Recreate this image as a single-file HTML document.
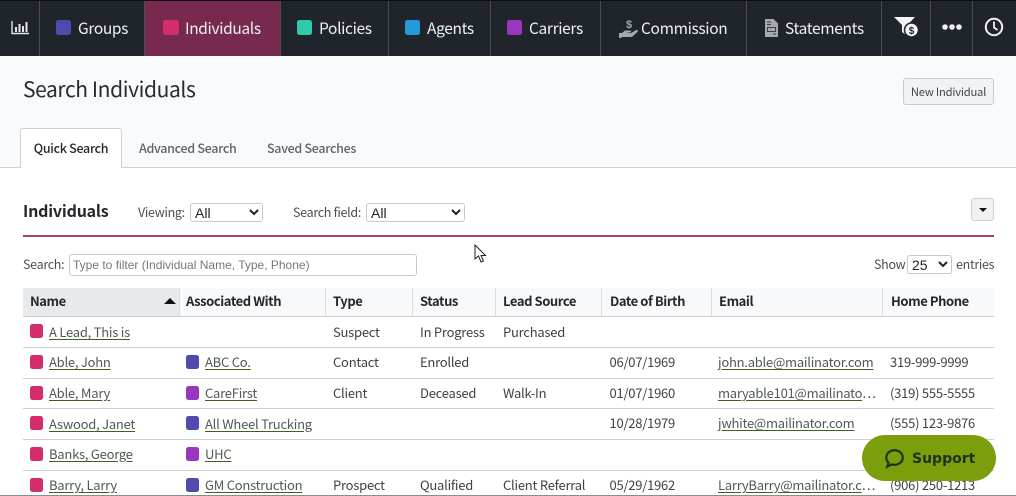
<!DOCTYPE html>
<html><head><meta charset="utf-8"><style>
*{box-sizing:border-box}
html,body{margin:0;padding:0}
body{width:1016px;height:496px;overflow:hidden;position:relative;background:#fff;font-family:"Noto Sans CJK JP","Liberation Sans",sans-serif;color:#2d3238}
.a{position:absolute;white-space:nowrap}
.t{position:absolute;white-space:nowrap;font-size:13px;letter-spacing:-.24px;line-height:20px;color:#3d4247}
.l{color:#4f5a50;text-decoration:underline;text-decoration-color:#3f5f20;text-underline-offset:2px}
.h{position:absolute;white-space:nowrap;font-size:13px;letter-spacing:-.43px;line-height:20px;font-weight:700;color:#24282c;top:291px}
.n{position:absolute;white-space:nowrap;font-size:15.500px;letter-spacing:-.35px;line-height:24px;top:16px;color:#eef0f2}
.s{position:absolute;width:13px;height:14px;border-radius:2.5px}
.sep{position:absolute;top:1px;height:55px;width:1px;background:#4a4e52}
.ln{position:absolute;left:23px;width:971px;height:1px;background:#d0d2d4}
.hs{position:absolute;top:288px;height:28px;width:1px;background:#dcdfe2}
.lb{font-size:12.500px;letter-spacing:-.3px;line-height:20px;color:#4a4e52}
.tb{font-size:12.500px;letter-spacing:-.3px;line-height:20px;font-weight:500;color:#5f6367}
.pk{background:#d32d6c}.bl{background:#4f4aae}.pu{background:#9a37bf}
select{position:absolute;font-family:"Liberation Sans",sans-serif;font-size:14px;background:#fff;border:1px solid #c6c8ca;border-radius:3px;color:#222;padding:0}
</style></head><body>
<div class="a" style="left:0;top:0;width:1016px;height:56px;background:#1f252b;border-top:1px solid #0c0e10"></div>
<div class="a" style="left:144px;top:1px;width:136px;height:55px;background:#782a4e"></div>
<div class="sep" style="left:39px"></div><div class="sep" style="left:144px"></div><div class="sep" style="left:280px"></div><div class="sep" style="left:388px"></div><div class="sep" style="left:490px"></div><div class="sep" style="left:600px"></div><div class="sep" style="left:746px"></div><div class="sep" style="left:881px"></div><div class="sep" style="left:930px"></div><div class="sep" style="left:972px"></div>
<svg class="a" style="left:11px;top:20px" width="18" height="15" viewBox="0 0 18 15"><path d="M1 1V13.5H18" stroke="#e4e6e8" stroke-width="1.4" fill="none"/><path d="M4 7h2v5H4zM7.5 4h2v8h-2zM11 6h2v6h-2zM14.5 2h2v10h-2z" fill="#e4e6e8"/></svg>
<div class="s bl" style="left:56px;top:20px;width:15px;height:15px"></div><div class="n" style="left:78px">Groups</div>
<div class="s pk" style="left:163px;top:20px;width:16px;height:15px"></div><div class="n" style="left:185px">Individuals</div>
<div class="s" style="left:297px;top:20px;width:15px;height:15px;background:#2fc9ad"></div><div class="n" style="left:319px">Policies</div>
<div class="s" style="left:405px;top:20px;width:15px;height:15px;background:#259ad8"></div><div class="n" style="left:427px">Agents</div>
<div class="s pu" style="left:507px;top:20px;width:15px;height:15px"></div><div class="n" style="left:529px">Carriers</div>
<svg class="a" style="left:619px;top:18px" width="20" height="21" viewBox="0 0 20 21" fill="#a5a9ab"><path d="M0 15h3l3-2.500h5c1.500 0 1.500 2 0 2H8.500v.6H12l5-3c1.500-.8 2.500.8 1.500 1.800L13 19H3l-1 1H0z"/><text x="7" y="10" font-size="11" font-weight="700" font-family="Liberation Sans" fill="#a5a9ab">$</text></svg>
<div class="n" style="left:641px">Commission</div>
<svg class="a" style="left:765px;top:19px" width="13" height="18" viewBox="0 0 13 18"><path d="M0 0H8.500L13 4.500V18H0z" fill="#a5a9ab"/><path d="M2.500 8.500h8v4h-8z" fill="none" stroke="#3a3f43" stroke-width="1"/><path d="M8 15h3M2 3h4M2 5.500h4" stroke="#3a3f43" stroke-width="1"/></svg>
<div class="n" style="left:785px">Statements</div>
<svg class="a" style="left:893px;top:16px" width="27" height="22" viewBox="0 0 27 22"><path d="M1 1H22L14.500 9V20L9 16V9z" fill="#f2f3f4"/><circle cx="18.500" cy="14" r="7" fill="#f2f3f4" stroke="#1f252b" stroke-width="1.500"/><text x="18.500" y="18" text-anchor="middle" font-size="10" font-weight="700" font-family="Liberation Sans" fill="#1f252b">$</text></svg>
<svg class="a" style="left:942px;top:23px" width="20" height="8" viewBox="0 0 20 8" fill="#f0f1f2"><circle cx="3" cy="4" r="2.800"/><circle cx="10" cy="4" r="2.800"/><circle cx="17" cy="4" r="2.800"/></svg>
<svg class="a" style="left:984px;top:17px" width="20" height="20" viewBox="0 0 20 20"><circle cx="10" cy="10" r="8.200" fill="none" stroke="#f0f1f2" stroke-width="2"/><path d="M10 4.500V10.500L13.500 13" fill="none" stroke="#f0f1f2" stroke-width="1.800"/></svg>

<div class="a" style="left:0;top:56px;width:1016px;height:112px;background:#f9fafc;border-bottom:1px solid #cfd1d3"></div>
<div class="a" style="left:23px;top:74px;font-size:21px;letter-spacing:-.4px;line-height:30px;color:#272c31">Search Individuals</div>
<div class="a" style="left:903px;top:78px;width:91px;height:27px;background:#f0f2f3;border:1px solid #c9cccf;border-radius:3px;font-size:11.200px;letter-spacing:-.2px;line-height:26px;text-align:center;color:#42474c">New Individual</div>
<div class="a tb" style="left:20px;top:128px;width:102px;height:40px;background:#fff;border:1px solid #cfd1d3;border-bottom:0;border-radius:3px 3px 0 0;line-height:38px;text-align:center;color:#24282c">Quick Search</div>
<div class="a tb" style="left:139px;top:138px">Advanced Search</div>
<div class="a tb" style="left:267px;top:138px">Saved Searches</div>

<div class="a" style="left:23px;top:198px;font-size:16px;letter-spacing:-.2px;line-height:24px;font-weight:700;color:#24282c">Individuals</div>
<div class="a lb" style="left:138px;top:202px">Viewing:</div>
<select style="left:190px;top:203px;width:73px;height:19px"><option>All</option></select>
<div class="a lb" style="left:293px;top:202px">Search field:</div>
<select style="left:366px;top:203px;width:99px;height:19px"><option>All</option></select>
<div class="a" style="left:971px;top:198px;width:23px;height:23px;background:#eff1f3;border:1px solid #cfd1d3;border-radius:3px"></div>
<div class="a" style="left:979px;top:208px;width:0;height:0;border-left:4px solid transparent;border-right:4px solid transparent;border-top:4px solid #111"></div>
<div class="a" style="left:23px;top:235px;width:971px;height:2px;background:#a94470"></div>
<svg class="a" style="left:474px;top:244px" width="14" height="20" viewBox="0 0 14 20"><path d="M1 1V15L4.500 12L7 18L9.500 17L7 11.500H11.500z" fill="#fff" stroke="#222" stroke-width="1"/></svg>

<div class="a lb" style="left:23px;top:254px">Search:</div>
<div class="a" style="left:69px;top:254px;width:348px;height:22px;border:1px solid #c6c8ca;border-radius:3px;font-family:'Liberation Sans',sans-serif;font-size:12px;line-height:20px;padding-left:3px;color:#777">Type to filter (Individual Name, Type, Phone)</div>
<div class="a lb" style="left:874px;top:254px">Show</div>
<select style="left:907px;top:255px;width:45px;height:19px"><option>25</option></select>
<div class="a lb" style="left:956px;top:254px">entries</div>

<div class="a" style="left:23px;top:288px;width:971px;height:28px;background:#f8f9fb"></div>
<div class="a" style="left:23px;top:288px;width:156px;height:28px;background:#e7eaec"></div>
<div class="ln" style="top:316px;background:#cfd1d3"></div>
<div class="hs" style="left:179px"></div><div class="hs" style="left:325px"></div><div class="hs" style="left:412px"></div><div class="hs" style="left:495px"></div><div class="hs" style="left:601px"></div><div class="hs" style="left:711px"></div><div class="hs" style="left:882px"></div>
<div class="h" style="left:30px">Name</div>
<div class="a" style="left:164px;top:298px;width:0;height:0;border-left:6px solid transparent;border-right:6px solid transparent;border-bottom:6px solid #111"></div>
<div class="h" style="left:186px">Associated With</div><div class="h" style="left:333px">Type</div><div class="h" style="left:420px">Status</div><div class="h" style="left:503px">Lead Source</div><div class="h" style="left:610px">Date of Birth</div><div class="h" style="left:719px">Email</div><div class="h" style="left:891px">Home Phone</div>

<div class="ln" style="top:347px"></div><div class="ln" style="top:378px"></div><div class="ln" style="top:408px"></div><div class="ln" style="top:439px"></div><div class="ln" style="top:470px"></div>

<div class="s pk" style="left:30px;top:324px"></div><div class="t l" style="left:49px;top:322px">A Lead, This is</div>
<div class="t" style="left:333px;top:322px">Suspect</div><div class="t" style="left:420px;top:322px">In Progress</div><div class="t" style="left:503px;top:322px">Purchased</div>

<div class="s pk" style="left:30px;top:355px"></div><div class="t l" style="left:49px;top:352px">Able, John</div>
<div class="s bl" style="left:186px;top:355px"></div><div class="t l" style="left:205px;top:352px">ABC Co.</div>
<div class="t" style="left:333px;top:352px">Contact</div><div class="t" style="left:420px;top:352px">Enrolled</div><div class="t" style="left:609.500px;top:352px">06/07/1969</div><div class="t l" style="left:718px;top:352px">john.able@mailinator.com</div><div class="t" style="left:890px;top:352px">319-999-9999</div>

<div class="s pk" style="left:30px;top:386px"></div><div class="t l" style="left:49px;top:383px">Able, Mary</div>
<div class="s pu" style="left:186px;top:386px"></div><div class="t l" style="left:205px;top:383px">CareFirst</div>
<div class="t" style="left:333px;top:383px">Client</div><div class="t" style="left:420px;top:383px">Deceased</div><div class="t" style="left:503px;top:383px">Walk-In</div><div class="t" style="left:609.500px;top:383px">01/07/1960</div><div class="t" style="left:718px;top:383px"><span class="l">maryable101@mailinato</span>…</div><div class="t" style="left:890px;top:383px">(319) 555-5555</div>

<div class="s pk" style="left:30px;top:416px"></div><div class="t l" style="left:49px;top:414px">Aswood, Janet</div>
<div class="s bl" style="left:186px;top:416px"></div><div class="t l" style="left:205px;top:414px">All Wheel Trucking</div>
<div class="t" style="left:609.500px;top:413px">10/28/1979</div><div class="t l" style="left:718px;top:413px">jwhite@mailinator.com</div><div class="t" style="left:890px;top:413px">(555) 123-9876</div>

<div class="s pk" style="left:30px;top:447px"></div><div class="t l" style="left:49px;top:444px">Banks, George</div>
<div class="s pu" style="left:186px;top:447px"></div><div class="t l" style="left:205px;top:444px">UHC</div>

<div class="s pk" style="left:30px;top:478px"></div><div class="t l" style="left:49px;top:475px">Barry, Larry</div>
<div class="s bl" style="left:186px;top:478px"></div><div class="t l" style="left:205px;top:475px">GM Construction</div>
<div class="t" style="left:333px;top:475px">Prospect</div><div class="t" style="left:420px;top:475px">Qualified</div><div class="t" style="left:503px;top:475px">Client Referral</div><div class="t" style="left:609.500px;top:475px">05/29/1962</div><div class="t" style="left:718px;top:475px"><span class="l">LarryBarry@mailinator.c</span>…</div><div class="t" style="left:890px;top:475px">(906) 250-1213</div>

<div class="a" style="left:0;top:495px;width:1016px;height:1px;background:#8a8c8e"></div>
<div class="a" style="left:862px;top:435px;width:134px;height:46px;border-radius:23px;background:#7b9e0a"></div>
<svg class="a" style="left:884px;top:448px" width="21" height="21" viewBox="0 0 23 23"><path d="M11.500 2.500C6.500 2.500 2.500 5.800 2.500 10.500C2.500 13 3.500 14.800 5 16L3.500 20.500L8.500 18C9.400 18.300 10.400 18.400 11.500 18.400C16.500 18.400 20.500 15 20.500 10.500C20.500 5.800 16.500 2.500 11.500 2.500Z" fill="none" stroke="#24301a" stroke-width="2.400"/></svg>
<div class="a" style="left:912px;top:449px;font-family:'DejaVu Sans',sans-serif;font-size:14px;line-height:20px;font-weight:700;color:#24301a">Support</div>
</body></html>
